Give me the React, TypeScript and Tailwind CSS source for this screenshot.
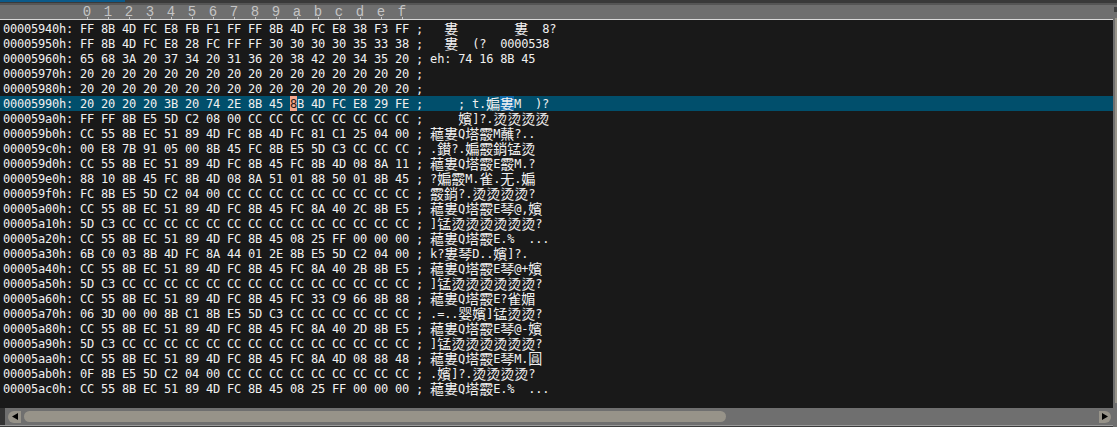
import React from "react";

const CC = (n: number) => Array(n).fill("CC").join(" ");
const P = "CC 55 8B EC 51 89 4D FC";
const Q = "藲婁Q塔霰E";

const rows: [string, string, string][] = [
  ["00005940h", "FF 8B 4D FC E8 FB F1 FF FF 8B 4D FC E8 38 F3 FF", "  婁        婁  8?"],
  ["00005950h", "FF 8B 4D FC E8 28 FC FF FF 30 30 30 30 35 33 38", "  婁  (?  0000538"],
  ["00005960h", "65 68 3A 20 37 34 20 31 36 20 38 42 20 34 35 20", "eh: 74 16 8B 45 "],
  ["00005970h", "20 20 20 20 20 20 20 20 20 20 20 20 20 20 20 20", ""],
  ["00005980h", "20 20 20 20 20 20 20 20 20 20 20 20 20 20 20 20", ""],
  ["00005990h", "", ""],
  ["000059a0h", `FF FF 8B E5 5D C2 08 00 ${CC(8)}`, "    嬪]?.烫烫烫烫"],
  ["000059b0h", `${P} 8B 4D FC 81 C1 25 04 00`, "藲婁Q塔霰M蘸?.."],
  ["000059c0h", "00 E8 7B 91 05 00 8B 45 FC 8B E5 5D C3 CC CC CC", ".鑚?.媥霰銷锰烫"],
  ["000059d0h", `${P} 8B 45 FC 8B 4D 08 8A 11`, `${Q}霰M.?`],
  ["000059e0h", "88 10 8B 45 FC 8B 4D 08 8A 51 01 88 50 01 8B 45", "?媥霰M.雀.无.媥"],
  ["000059f0h", `FC 8B E5 5D C2 04 00 ${CC(9)}`, "霰銷?.烫烫烫烫?"],
  ["00005a00h", `${P} 8B 45 FC 8A 40 2C 8B E5`, `${Q}琴@,嬪`],
  ["00005a10h", `5D C3 ${CC(14)}`, "]锰烫烫烫烫烫烫?"],
  ["00005a20h", `${P} 8B 45 08 25 FF 00 00 00`, `${Q}.%  ...`],
  ["00005a30h", "6B C0 03 8B 4D FC 8A 44 01 2E 8B E5 5D C2 04 00", "k?婁琴D..嬪]?."],
  ["00005a40h", `${P} 8B 45 FC 8A 40 2B 8B E5`, `${Q}琴@+嬪`],
  ["00005a50h", `5D C3 ${CC(14)}`, "]锰烫烫烫烫烫烫?"],
  ["00005a60h", `${P} 8B 45 FC 33 C9 66 8B 88`, `${Q}?雀媚`],
  ["00005a70h", `06 3D 00 00 8B C1 8B E5 5D C3 ${CC(6)}`, ".=..婴嬪]锰烫烫?"],
  ["00005a80h", `${P} 8B 45 FC 8A 40 2D 8B E5`, `${Q}琴@-嬪`],
  ["00005a90h", `5D C3 ${CC(14)}`, "]锰烫烫烫烫烫烫?"],
  ["00005aa0h", `${P} 8B 45 FC 8A 4D 08 88 48`, `${Q}琴M.圓`],
  ["00005ab0h", `0F 8B E5 5D C2 04 00 ${CC(9)}`, ".嬪]?.烫烫烫烫?"],
  ["00005ac0h", `${P} 8B 45 08 25 FF 00 00 00`, `${Q}.%  ...`],
];

const isWide = (c: string) => c.charCodeAt(0) > 0x2e80;

function Wide({ c, selected }: { c: string; selected?: boolean }) {
  return (
    <span
      className={`inline-block w-[14px] h-[15px] text-center align-top text-[14px] leading-[15px] tracking-normal ${selected ? "bg-[#0f6cab]" : ""}`}
      style={{ fontFamily: '"Noto Sans CJK TC", sans-serif' }}
    >
      {c}
    </span>
  );
}

function Ascii({ text }: { text: string }) {
  return (
    <>
      {Array.from(text).map((c, i) => (isWide(c) ? <Wide key={i} c={c} /> : <span key={i}>{c}</span>))}
    </>
  );
}

function Row({ addr, hex, text }: { addr: string; hex: string; text: string }) {
  return (
    <div className="h-[15px] pl-[3px] whitespace-pre leading-[16px]">
      {addr}:{" "}{hex} ;{" "}
      <Ascii text={text} />
    </div>
  );
}

function CursorRow() {
  return (
    <div className="h-[15px] pl-[3px] whitespace-pre leading-[16px] bg-[#014f6c]">
      00005990h: 20 20 20 20 3B 20 74 2E 8B 45{" "}
      <span className="inline-block h-[15px] bg-[#f6a68c] text-[#2a1a14]">8</span>B 4D FC E8 29 FE ;{"     "}; t.
      <Wide c="媥" />
      <Wide c="婁" selected />M  )?
    </div>
  );
}

const ruler = "0123456789abcdef".split("");

export default function App() {
  return (
    <div className="w-[1117px] h-[427px] flex flex-col overflow-hidden bg-[#6f6f6f]">
      <div className="h-[3px] bg-[#3a3a3a] shrink-0">
        <div className="w-[125px] h-[2px] bg-[#0b5a8a]" />
      </div>
      <div className="h-[2px] bg-[#565656] shrink-0" />

      <div className="flex-1 flex min-h-0">
        <div className="w-[1113px] flex flex-col">
          <div className="h-[14px] shrink-0 flex pl-[80px] gap-[7px] text-[#c4c4c4] text-[14px] leading-[12px]" style={{ fontFamily: '"Liberation Mono", monospace' }}>
            {ruler.map((d) => (
              <div key={d} className="w-[14px] flex flex-col items-center pt-[2px]">
                <span className="h-[10px] leading-[11px]">{d}</span>
                <span className="w-px h-[2px] bg-[#c4c4c4]" />
              </div>
            ))}
          </div>
          <div className="h-px bg-[#d8d8d8] shrink-0" />
          <div
            className="h-[388px] bg-[#191919] pt-px text-[#f0f0f0] text-[12px] tracking-[-0.224px]"
            style={{ fontFamily: '"DejaVu Sans Mono", "Noto Sans CJK TC", monospace' }}
          >
            {rows.map(([addr, hex, text]) =>
              addr === "00005990h" ? <CursorRow key={addr} /> : <Row key={addr} addr={addr} hex={hex} text={text} />
            )}
          </div>
          <div className="h-[17px] shrink-0 flex items-center bg-[#6f6f6f]">
            <div className="w-[5px] h-[17px] bg-[#333333]" />
            <div className="ml-[3px] w-[13px] h-[12px] rounded-l-md bg-[#979389] flex items-center justify-center">
              <svg width="6" height="7" viewBox="0 0 6 7"><path d="M0 3.5L6 0V7Z" fill="#000" /></svg>
            </div>
            <div className="ml-[3px] w-[702px] h-[11px] rounded-l-md rounded-r-md bg-[#979389]" />
            <div className="ml-auto mr-[2px] w-[12px] h-[12px] rounded-r-md bg-[#979389] flex items-center justify-center">
              <svg width="6" height="7" viewBox="0 0 6 7"><path d="M6 3.5L0 0V7Z" fill="#000" /></svg>
            </div>
          </div>
          <div className="h-px bg-[#9a9a9a] shrink-0" />
          <div className="h-px bg-[#3c3c3c] shrink-0" />
        </div>
        <div className="w-[4px] flex flex-col items-end">
          <div className="w-[3px] h-[5px] mt-[2px] bg-[#3f3f3f]" />
          <div className="w-[2px] h-[385px] mt-[6px] bg-[#979389]" />
        </div>
      </div>
    </div>
  );
}
